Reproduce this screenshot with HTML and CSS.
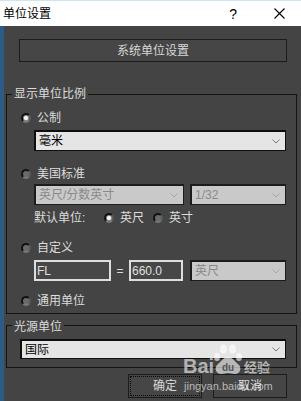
FILE: index.html
```html
<!DOCTYPE html>
<html lang="zh-CN">
<head>
    <meta charset="UTF-8">
    <title>单位设置</title>
    <link rel="stylesheet" href="styles.css">
</head>
<body>
<div class="dialog">
    <div class="titlebar">
        <span class="title">单位设置</span>
        <span class="help">?</span>
        <svg class="close" viewBox="0 0 11 11"><path d="M0.5 0.5L10.5 10.5M10.5 0.5L0.5 10.5" stroke="#000" stroke-width="1.1" fill="none"/></svg>
    </div>

    <div class="content">
        <div class="btn sys-btn">系统单位设置</div>

        <div class="group scale-group">
            <div class="group-title">显示单位比例</div>

            <div class="radio-row r-metric"><span class="radio on"></span><span class="lbl">公制</span></div>
            <div class="select sel-metric">
                <span>毫米</span>
                <svg class="chev" viewBox="0 0 8 5"><polyline points="0.5,0.5 4,4 7.5,0.5"/></svg>
            </div>

            <div class="radio-row r-us"><span class="radio"></span><span class="lbl">美国标准</span></div>
            <div class="field-row us-fields">
                <div class="select disabled sel-feet">
                    <span>英尺/分数英寸</span>
                    <svg class="chev" viewBox="0 0 8 5"><polyline points="0.5,0.5 4,4 7.5,0.5"/></svg>
                </div>
                <div class="select disabled sel-frac">
                    <span class="latin">1/32</span>
                    <svg class="chev" viewBox="0 0 8 5"><polyline points="0.5,0.5 4,4 7.5,0.5"/></svg>
                </div>
            </div>
            <div class="default-row">
                <span class="default-lbl">默认单位:</span>
                <span class="radio on"></span><span class="lbl">英尺</span>
                <span class="radio second"></span><span class="lbl">英寸</span>
            </div>

            <div class="radio-row r-custom"><span class="radio"></span><span class="lbl">自定义</span></div>
            <div class="field-row custom-fields">
                <div class="input in-name">FL</div>
                <span class="eq">=</span>
                <div class="input in-value">660.0</div>
                <div class="select disabled sel-custom">
                    <span>英尺</span>
                    <svg class="chev" viewBox="0 0 8 5"><polyline points="0.5,0.5 4,4 7.5,0.5"/></svg>
                </div>
            </div>

            <div class="radio-row r-generic"><span class="radio"></span><span class="lbl">通用单位</span></div>
        </div>

        <div class="group light-group">
            <div class="group-title">光源单位</div>
            <div class="select sel-light">
                <span>国际</span>
                <svg class="chev" viewBox="0 0 8 5"><polyline points="0.5,0.5 4,4 7.5,0.5"/></svg>
            </div>
        </div>

        <div class="actions">
            <div class="btn action focus">确定</div>
            <div class="btn action">取消</div>
        </div>
    </div>

    <!-- watermark of the source site -->
    <div class="wm wm-bai">Bai</div>
    <svg class="wm-paw" viewBox="0 0 30 31">
        <ellipse cx="4" cy="13" rx="3" ry="4"/>
        <ellipse cx="10.5" cy="5" rx="3.5" ry="4.5"/>
        <ellipse cx="19.5" cy="5" rx="3.5" ry="4.5"/>
        <ellipse cx="26" cy="13" rx="3" ry="4"/>
        <path d="M15 13c5 0 7 5 11 8c3 3 1 9-4 9c-3 0-5-1-7-1s-4 1-7 1c-5 0-7-6-4-9c4-3 6-8 11-8z"/>
        <text x="15" y="27" text-anchor="middle">du</text>
    </svg>
    <div class="wm wm-jy">经验</div>
    <div class="wm wm-url">jingyan.baidu.com</div>
</div>
</body>
</html>
```

FILE: styles.css
```css
* {
    box-sizing: border-box;
}
body {
    margin: 0;
    background-color: #444;
    font-family: "Liberation Sans", "Noto Sans CJK SC", sans-serif;
    font-size: 12px;
    line-height: 16px;
    color: #dcdcdc;
}
.dialog {
    position: relative;
    width: 301px;
    height: 401px;
    overflow: hidden;
    background-color: #444;
}
.titlebar {
    height: 26px;
    background-color: #fff;
    border-top: 1px solid #cbe8f1;
    display: flex;
    align-items: center;
    padding: 0 16px 0 3px;
    color: #000;
}
.help {
    margin-left: auto;
    font-size: 14px;
}
.close {
    width: 11px;
    height: 11px;
    margin-left: 37px;
}
.content {
    height: 375px;
    border-left: 4px solid #2c5b86;
    padding-top: 13px;
}
.btn {
    height: 23px;
    display: flex;
    align-items: center;
    justify-content: center;
    background-color: #464646;
    border: 1px solid #1c1c1c;
    color: #d8d8d8;
}
.sys-btn {
    width: 268px;
    margin-left: 15px;
}

/* group boxes */
.group {
    width: 291px;
    margin-left: 2px;
    border: 1px solid #141414;
}
.group-title {
    width: fit-content;
    height: 16px;
    margin: -9px 0 0 5px;
    padding: 0 2px;
    background-color: #444;
}
.scale-group {
    margin-top: 32px;
    padding-bottom: 4px;
}
.light-group {
    margin-top: 11px;
    padding-bottom: 8px;
}
.light-group .group-title {
    margin-top: -7px;
}

.radio-row {
    display: flex;
    align-items: center;
    height: 16px;
    padding-left: 14px;
}
.radio {
    flex: none;
    width: 10px;
    height: 10px;
    border-radius: 50%;
    background-color: #6a6a6a;
    border: 2px solid #121212;
    border-right-color: #5a5a5a;
    border-bottom-color: #777;
}
.radio.on {
    background: radial-gradient(circle, #f0f0f0 0 1.8px, #8c8c8c 2.4px);
}
.lbl {
    margin-left: 6px;
}
.r-metric { margin-top: 8px; }
.r-us { margin-top: 15px; }
.r-custom { margin-top: 14px; }
.r-generic { margin-top: 12px; }

/* dropdowns */
.select {
    height: 21px;
    display: flex;
    align-items: center;
    justify-content: space-between;
    padding: 0 5px 0 3px;
    background-color: #e5e5e5;
    color: #000;
    border: 2px solid #0e0e0e;
    border-right-width: 1px;
    border-bottom-width: 1px;
}
.select.disabled {
    background-color: #c9c9c9;
    color: #8a8a8a;
    border-color: #1c1c1c;
}
.chev {
    width: 8px;
    height: 5px;
    fill: none;
    stroke: #7a7a7a;
    stroke-width: 1;
}
.disabled .chev {
    stroke: #a6a6a6;
}
.sel-metric {
    width: 252px;
    margin: 4px 0 0 27px;
}
.sel-light {
    width: 266px;
    height: 20px;
    margin: 4px 0 0 13px;
}

.field-row {
    display: flex;
    align-items: center;
    padding-left: 27px;
}
.us-fields {
    margin-top: 2px;
}
.sel-feet {
    width: 150px;
}
.sel-frac {
    width: 96px;
    margin-left: 6px;
}
.default-row {
    display: flex;
    align-items: center;
    height: 16px;
    margin-top: 5px;
    padding-left: 27px;
}
.default-lbl {
    width: 70px;
}
.radio.second {
    margin-left: 9px;
}

.custom-fields {
    margin-top: 4px;
}
.input {
    height: 21px;
    display: flex;
    align-items: center;
    padding-left: 1px;
    background-color: #474747;
    border: 2px solid #dedede;
    color: #e0e0e0;
}
.in-name {
    width: 77px;
}
.eq {
    width: 18px;
    text-align: center;
}
.in-value {
    width: 54px;
}
.sel-custom {
    width: 96px;
    margin-left: 7px;
}

/* bottom buttons */
.actions {
    display: flex;
    justify-content: flex-end;
    gap: 11px;
    margin-top: 6px;
    padding-right: 14px;
}
.action {
    width: 74px;
    height: 24px;
}
.focus {
    outline: 1px dotted #0a0a0a;
    outline-offset: -3px;
}

/* watermark */
.wm {
    position: absolute;
    color: rgba(255, 255, 255, 0.62);
    font-weight: bold;
}
.wm-bai {
    left: 183px;
    top: 355px;
    font-size: 20px;
    line-height: 22px;
}
.wm-jy {
    left: 244px;
    top: 359px;
    font-family: "Noto Sans CJK SC", sans-serif;
    font-size: 13px;
}
.wm-url {
    left: 184px;
    top: 380px;
    font-size: 11px;
    font-weight: normal;
    line-height: 13px;
}
.wm-paw {
    position: absolute;
    left: 213px;
    top: 344px;
    width: 30px;
    height: 31px;
    fill: rgba(255, 255, 255, 0.62);
}
.wm-paw text {
    fill: #555;
    font-family: "Liberation Sans", sans-serif;
    font-size: 10px;
    font-weight: bold;
}
```
